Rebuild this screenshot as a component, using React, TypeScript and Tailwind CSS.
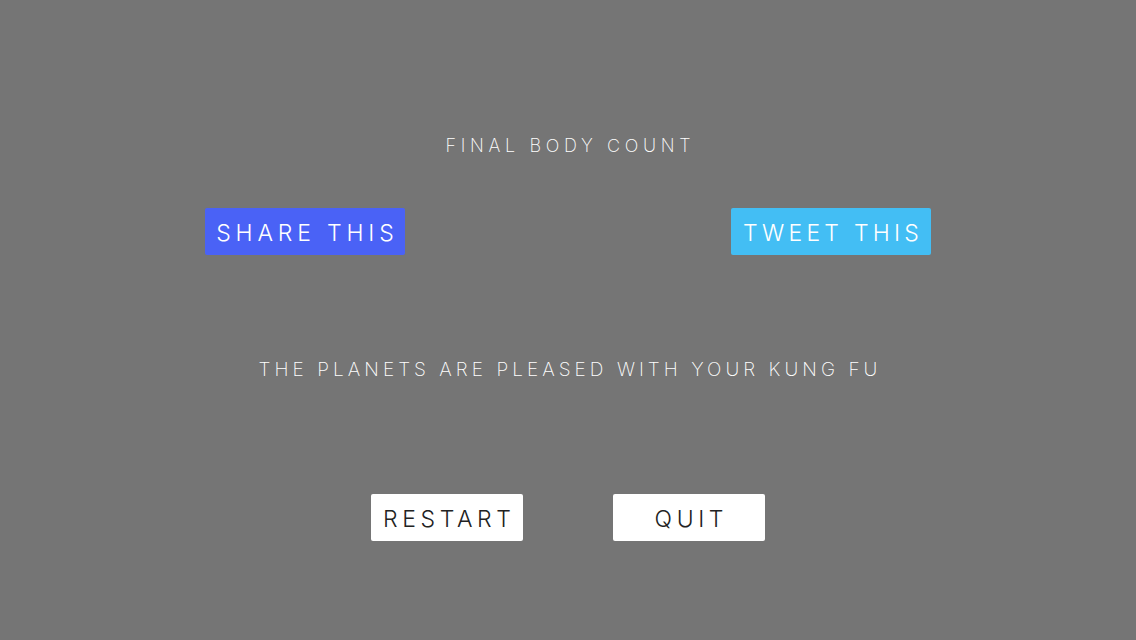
export default function App() {
  return (
    <div
      className="flex h-[640px] w-full flex-col items-center bg-[#757575] text-white"
      style={{ fontFamily: "Inter, 'Open Sans', sans-serif" }}
    >
      <h1 className="mt-[134px] h-[24px] text-[18px] font-extralight leading-[24px] tracking-[0.26em] pl-[0.26em]">
        FINAL BODY COUNT
      </h1>

      <div className="mt-[50px] flex w-[726px] justify-between">
        <button className="flex h-[47px] w-[200px] items-center justify-center rounded-[2px] bg-[#4a62f6] pt-[3px] text-[23px] font-light tracking-[0.21em] pl-[0.21em] text-white">
          SHARE THIS
        </button>
        <button className="flex h-[47px] w-[200px] items-center justify-center rounded-[2px] bg-[#43bef4] pt-[3px] text-[23px] font-light tracking-[0.185em] pl-[0.185em] text-white">
          TWEET THIS
        </button>
      </div>

      <p className="mt-[102px] h-[26px] text-[19px] font-extralight leading-[26px] tracking-[0.213em] pl-[0.213em]">
        THE PLANETS ARE PLEASED WITH YOUR KUNG FU
      </p>

      <div className="mt-[111px] flex gap-[90px]">
        <button className="flex h-[47px] w-[152px] items-center justify-center rounded-[2px] bg-white pt-[3px] text-[23px] font-light tracking-[0.2em] pl-[0.2em] text-[#222]">
          RESTART
        </button>
        <button className="flex h-[47px] w-[152px] items-center justify-center rounded-[2px] bg-white pt-[3px] text-[23px] font-light tracking-[0.2em] pl-[0.2em] text-[#222]">
          QUIT
        </button>
      </div>
    </div>
  );
}
